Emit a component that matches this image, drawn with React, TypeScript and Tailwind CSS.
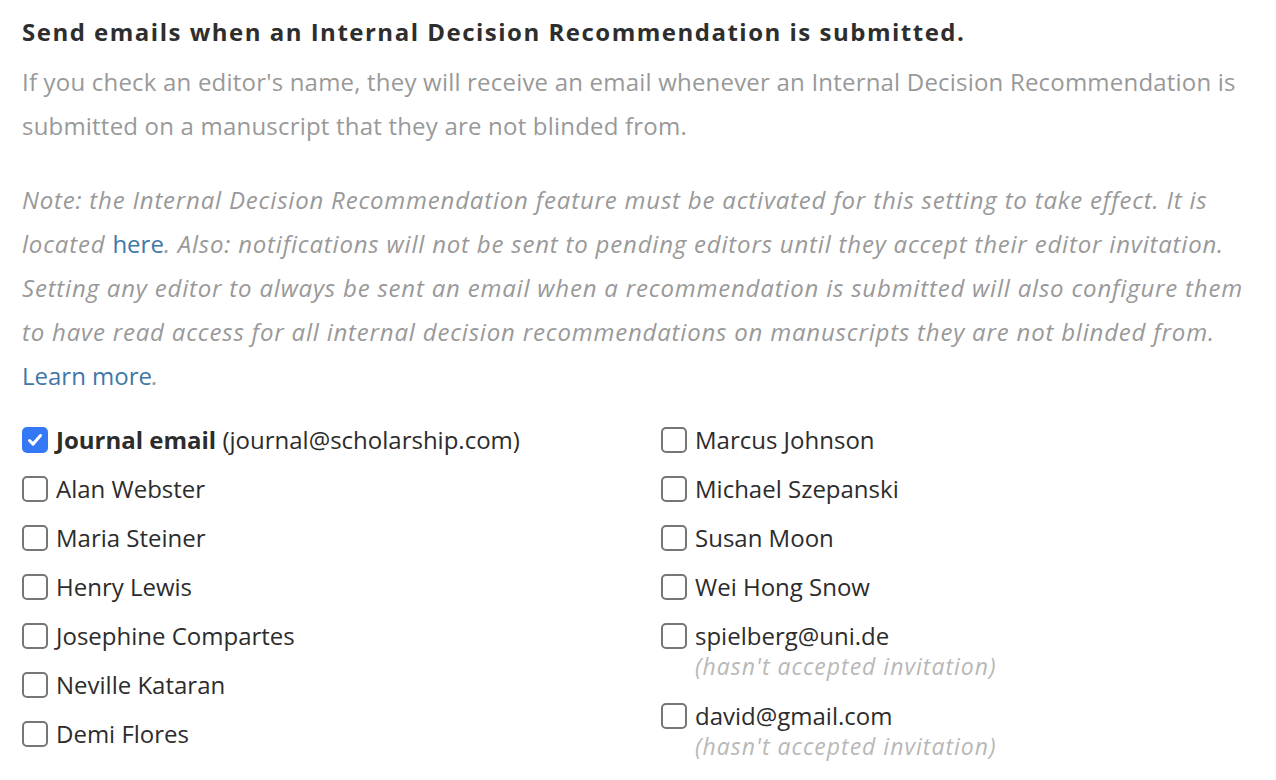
import React from "react";

type Editor = {
  name: string;
  pending?: boolean;
};

const leftEditors: Editor[] = [
  { name: "Alan Webster" },
  { name: "Maria Steiner" },
  { name: "Henry Lewis" },
  { name: "Josephine Compartes" },
  { name: "Neville Kataran" },
  { name: "Demi Flores" },
];

const rightEditors: Editor[] = [
  { name: "Marcus Johnson" },
  { name: "Michael Szepanski" },
  { name: "Susan Moon" },
  { name: "Wei Hong Snow" },
  { name: "spielberg@uni.de", pending: true },
  { name: "david@gmail.com", pending: true },
];

const Box = ({ checked }: { checked?: boolean }) =>
  checked ? (
    <span className="flex h-[26px] w-[26px] shrink-0 items-center justify-center rounded-[5px] bg-[#3478f6]">
      <svg width="18" height="18" viewBox="0 0 18 18" fill="none">
        <path
          d="M3.5 9.5l3.6 3.6 7.4-8.6"
          stroke="white"
          strokeWidth="3"
          strokeLinecap="round"
          strokeLinejoin="round"
        />
      </svg>
    </span>
  ) : (
    <span className="h-[26px] w-[26px] shrink-0 rounded-[5px] border-2 border-[#767676] bg-white" />
  );

const Row = ({ editor }: { editor: Editor }) => (
  <label className="flex items-start gap-2">
    <span className="flex h-[31px] items-center">
      <Box />
    </span>
    <span className="flex flex-col">
      <span className="leading-[31px]">{editor.name}</span>
      {editor.pending && (
        <span className="text-[23px] italic leading-[31px] tracking-[1px] text-[#b8b8b8]">
          (hasn't accepted invitation)
        </span>
      )}
    </span>
  </label>
);

export default function App() {
  return (
    <div className="min-h-screen bg-white px-[22px] pt-[14px] font-['Open_Sans',sans-serif] text-[24px] text-[#2c2c2c]">
      <h2 className="text-[24px] font-bold leading-[36px] tracking-[1.5px] text-[#2e2e2e]">
        Send emails when an Internal Decision Recommendation is submitted.
      </h2>
      <p className="mt-[10px] leading-[44px] tracking-[0.2px] text-[#999]">
        If you check an editor's name, they will receive an email whenever an
        Internal Decision Recommendation is
        <br />
        submitted on a manuscript that they are not blinded from.
      </p>
      <p className="mt-[30px] italic leading-[44px] tracking-[0.8px] text-[#999]">
        Note: the Internal Decision Recommendation feature must be activated for
        this setting to take effect. It is
        <br />
        located{" "}
        <a className="not-italic tracking-normal text-[#3f78a6]">here</a>. Also:
        notifications will not be sent to pending editors until they accept
        their editor invitation.
        <br />
        Setting any editor to always be sent an email when a recommendation is
        submitted will also configure them
        <br />
        to have read access for all internal decision recommendations on
        manuscripts they are not blinded from.
        <br />
        <a className="not-italic tracking-normal text-[#3f78a6]">Learn more</a>.
      </p>
      <div className="mt-[26px] grid grid-cols-[639px_1fr]">
        <div className="flex flex-col gap-[18px]">
          <label className="flex items-start gap-2">
            <span className="flex h-[31px] items-center">
              <Box checked />
            </span>
            <span className="leading-[31px]">
              <b>Journal email</b> (journal@scholarship.com)
            </span>
          </label>
          {leftEditors.map((e) => (
            <Row key={e.name} editor={e} />
          ))}
        </div>
        <div className="flex flex-col gap-[18px]">
          {rightEditors.map((e) => (
            <Row key={e.name} editor={e} />
          ))}
        </div>
      </div>
    </div>
  );
}
